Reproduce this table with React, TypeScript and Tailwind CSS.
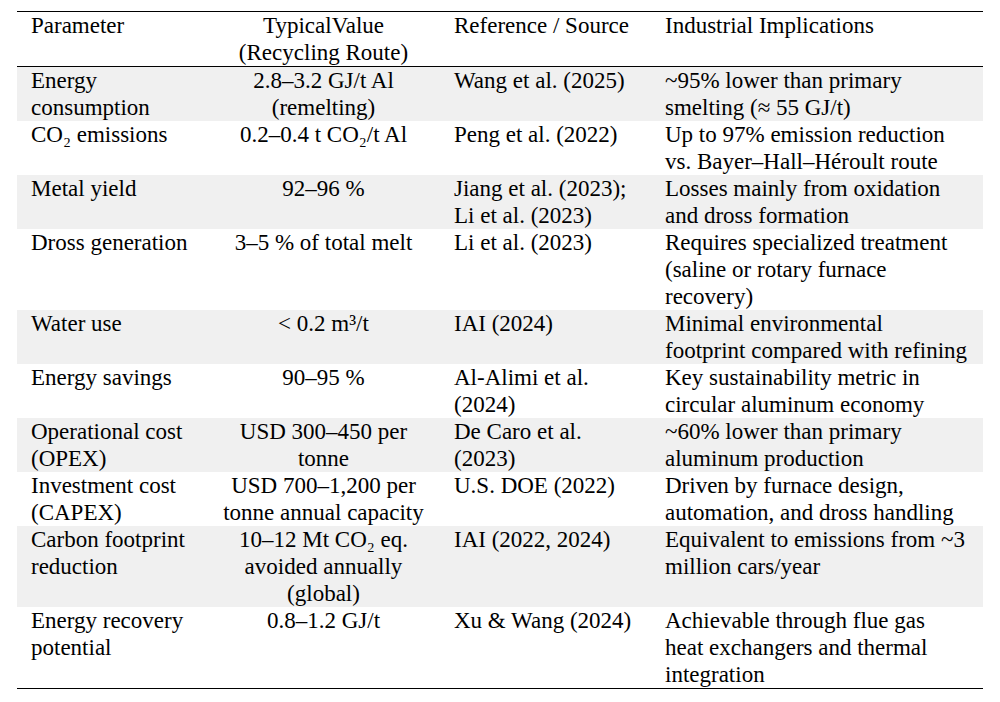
import React from 'react';

// each cell is written as its lines, so the breaks fall where they do in the source table
interface Row {
  parameter: string[];
  value: string[];
  source: string[];
  implication: string[];
}

const rows: Row[] = [
  {
    parameter: ['Energy', 'consumption'],
    value: ['2.8–3.2 GJ/t Al', '(remelting)'],
    source: ['Wang et al. (2025)'],
    implication: ['~95% lower than primary', 'smelting (≈ 55 GJ/t)'],
  },
  {
    parameter: ['CO₂ emissions'],
    value: ['0.2–0.4 t CO₂/t Al'],
    source: ['Peng et al. (2022)'],
    implication: ['Up to 97% emission reduction', 'vs. Bayer–Hall–Héroult route'],
  },
  {
    parameter: ['Metal yield'],
    value: ['92–96 %'],
    source: ['Jiang et al. (2023);', 'Li et al. (2023)'],
    implication: ['Losses mainly from oxidation', 'and dross formation'],
  },
  {
    parameter: ['Dross generation'],
    value: ['3–5 % of total melt'],
    source: ['Li et al. (2023)'],
    implication: ['Requires specialized treatment', '(saline or rotary furnace', 'recovery)'],
  },
  {
    parameter: ['Water use'],
    value: ['< 0.2 m³/t'],
    source: ['IAI (2024)'],
    implication: ['Minimal environmental', 'footprint compared with refining'],
  },
  {
    parameter: ['Energy savings'],
    value: ['90–95 %'],
    source: ['Al-Alimi et al.', '(2024)'],
    implication: ['Key sustainability metric in', 'circular aluminum economy'],
  },
  {
    parameter: ['Operational cost', '(OPEX)'],
    value: ['USD 300–450 per', 'tonne'],
    source: ['De Caro et al.', '(2023)'],
    implication: ['~60% lower than primary', 'aluminum production'],
  },
  {
    parameter: ['Investment cost', '(CAPEX)'],
    value: ['USD 700–1,200 per', 'tonne annual capacity'],
    source: ['U.S. DOE (2022)'],
    implication: ['Driven by furnace design,', 'automation, and dross handling'],
  },
  {
    parameter: ['Carbon footprint', 'reduction'],
    value: ['10–12 Mt CO₂ eq.', 'avoided annually', '(global)'],
    source: ['IAI (2022, 2024)'],
    implication: ['Equivalent to emissions from ~3', 'million cars/year'],
  },
  {
    parameter: ['Energy recovery', 'potential'],
    value: ['0.8–1.2 GJ/t'],
    source: ['Xu & Wang (2024)'],
    implication: ['Achievable through flue gas', 'heat exchangers and thermal', 'integration'],
  },
];

const Lines: React.FC<{ lines: string[] }> = ({ lines }) => (
  <>
    {lines.map((line, i) => (
      <div key={i} className="whitespace-nowrap">
        {line}
      </div>
    ))}
  </>
);

const App: React.FC = () => {
  return (
    <div className="min-h-[702px] w-[1000px] bg-white pt-[11px] pl-[17px] font-['Liberation_Serif','Times_New_Roman',serif] text-[23px] leading-[27px] text-black">
      <table className="w-[966px] table-fixed border-collapse">
        <colgroup>
          <col className="w-[190px]" />
          <col className="w-[233px]" />
          <col className="w-[211px]" />
          <col className="w-[332px]" />
        </colgroup>
        <thead>
          <tr className="border-t border-b border-black align-top">
            <th className="pl-[14px] pr-2 text-left font-normal">
              <Lines lines={['Parameter']} />
            </th>
            <th className="px-2 text-center font-normal">
              <Lines lines={['TypicalValue', '(Recycling Route)']} />
            </th>
            <th className="pl-[14px] pr-2 text-left font-normal">
              <Lines lines={['Reference / Source']} />
            </th>
            <th className="pl-[14px] pr-2 text-left font-normal">
              <Lines lines={['Industrial Implications']} />
            </th>
          </tr>
        </thead>
        <tbody>
          {rows.map((row, i) => (
            <tr
              key={row.parameter.join(' ')}
              className={
                'align-top ' +
                (i % 2 === 0 ? 'bg-[#f0f0f0]' : 'bg-white') +
                (i === rows.length - 1 ? ' border-b border-black' : '')
              }
            >
              <td className="pl-[14px] pr-2">
                <Lines lines={row.parameter} />
              </td>
              <td className="px-2 text-center">
                <Lines lines={row.value} />
              </td>
              <td className="pl-[14px] pr-2">
                <Lines lines={row.source} />
              </td>
              <td className="pl-[14px] pr-2">
                <Lines lines={row.implication} />
              </td>
            </tr>
          ))}
        </tbody>
      </table>
    </div>
  );
};

export default App;
